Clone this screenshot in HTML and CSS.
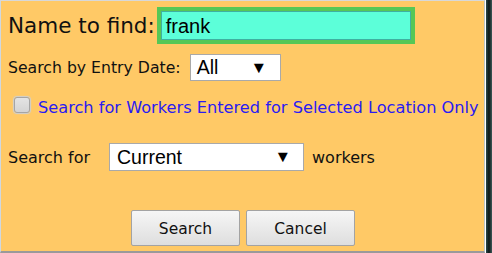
FILE: index.html
```html
<!DOCTYPE html>
<html>
<head>
<meta charset="utf-8">
<link rel="stylesheet" href="styles.css">
</head>
<body>
<div class="frame">
  <div class="panel">
    <div class="row name-row">
      <span class="big-label">Name to find:</span>
      <div class="name-box"><span class="name-text">frank</span></div>
    </div>
    <div class="row date-row">
      <span class="label date-label">Search by Entry Date:</span>
      <div class="select date-select"><span>All</span><span class="arrow">&#9660;</span></div>
    </div>
    <div class="row check-row">
      <span class="checkbox"></span>
      <span class="check-label">Search for Workers Entered for Selected Location Only</span>
    </div>
    <div class="row for-row">
      <span class="label for-label">Search for</span>
      <div class="select status-select"><span>Current</span><span class="arrow">&#9660;</span></div>
      <span class="label workers">workers</span>
    </div>
    <div class="row buttons">
      <button class="btn">Search</button>
      <button class="btn">Cancel</button>
    </div>
  </div>
</div>
</body>
</html>
```

FILE: styles.css
```css
html, body {
  margin: 0;
  padding: 0;
  background: #ffffff;
}
.frame {
  width: 492px;
  height: 253px;
  display: flex;
  background: linear-gradient(to right, #ffffff 0, #ffffff 486px, #2b4a4a 486px, #0c1616 489px, #3e5a5a 492px);
}
.panel {
  width: 483px;
  height: 250px;
  background: #ffc966;
  border-top: 1px solid #d8d8d8;
  border-left: 1px solid #cfd8e0;
  border-right: 1px solid #bfc6c6;
  border-bottom: 2px solid #9a9a9a;
  box-sizing: content-box;
  font-family: "DejaVu Sans", Verdana, sans-serif;
  color: #111;
  display: flex;
  flex-direction: column;
}
.row {
  display: flex;
  align-items: center;
}
.name-row {
  margin-top: 6px;
  padding-left: 7px;
  height: 37px;
}
.big-label {
  font-size: 21.5px;
}
.name-box {
  margin-left: 2px;
  width: 245px;
  height: 27px;
  border: 4px solid #56c756;
  background: #5cffd9;
  box-shadow: inset 0 0 0 1px #3fb0a0;
  display: flex;
  align-items: center;
  padding-left: 5px;
  padding-top: 2px;
  box-sizing: content-box;
}
.name-text {
  font-family: "Liberation Sans", Arial, sans-serif;
  font-size: 20px;
  color: #000;
}
.date-row {
  margin-top: 10px;
  padding-left: 7px;
  height: 27px;
}
.label {
  font-size: 16px;
}
.date-label {
  font-size: 15.7px;
}
.select {
  background: #fff;
  border: 1px solid #a9a9a9;
  box-sizing: border-box;
  display: flex;
  align-items: center;
  justify-content: space-between;
  font-family: "Liberation Sans", Arial, sans-serif;
  font-size: 19.5px;
  color: #000;
}
.date-select {
  margin-left: 9px;
  width: 91px;
  height: 27px;
  padding: 0 13px 0 6px;
}
.arrow {
  font-size: 16px;
  transform: scaleX(1.05);
}
.check-row {
  margin-top: 15px;
  padding-left: 13px;
  height: 23px;
}
.checkbox {
  width: 14px;
  height: 14px;
  margin-top: -6px;
  border: 1px solid #a5a5a5;
  border-radius: 3px;
  background: linear-gradient(#e4e4e4, #d4d4d4);
  box-shadow: 0 0 1px 1px #cfcfcf;
}
.check-label {
  margin-left: 8px;
  color: #2a1bf2;
  font-size: 16.2px;
}
.for-row {
  margin-top: 24px;
  padding-left: 7px;
  height: 28px;
}
.for-label {
  width: 101px;
}
.status-select {
  width: 195px;
  height: 28px;
  padding: 0 12px 0 7px;
}
.workers {
  margin-left: 8px;
}
.buttons {
  margin-top: 39px;
  padding-left: 130px;
  gap: 6px;
}
.btn {
  width: 109px;
  height: 36px;
  border: 1px solid #a3a3a3;
  border-radius: 2px;
  background: linear-gradient(#f6f6f6, #dedede);
  font-family: "DejaVu Sans", Verdana, sans-serif;
  font-size: 15.5px;
  color: #111;
  padding: 2px 0 0 0;
}
```
